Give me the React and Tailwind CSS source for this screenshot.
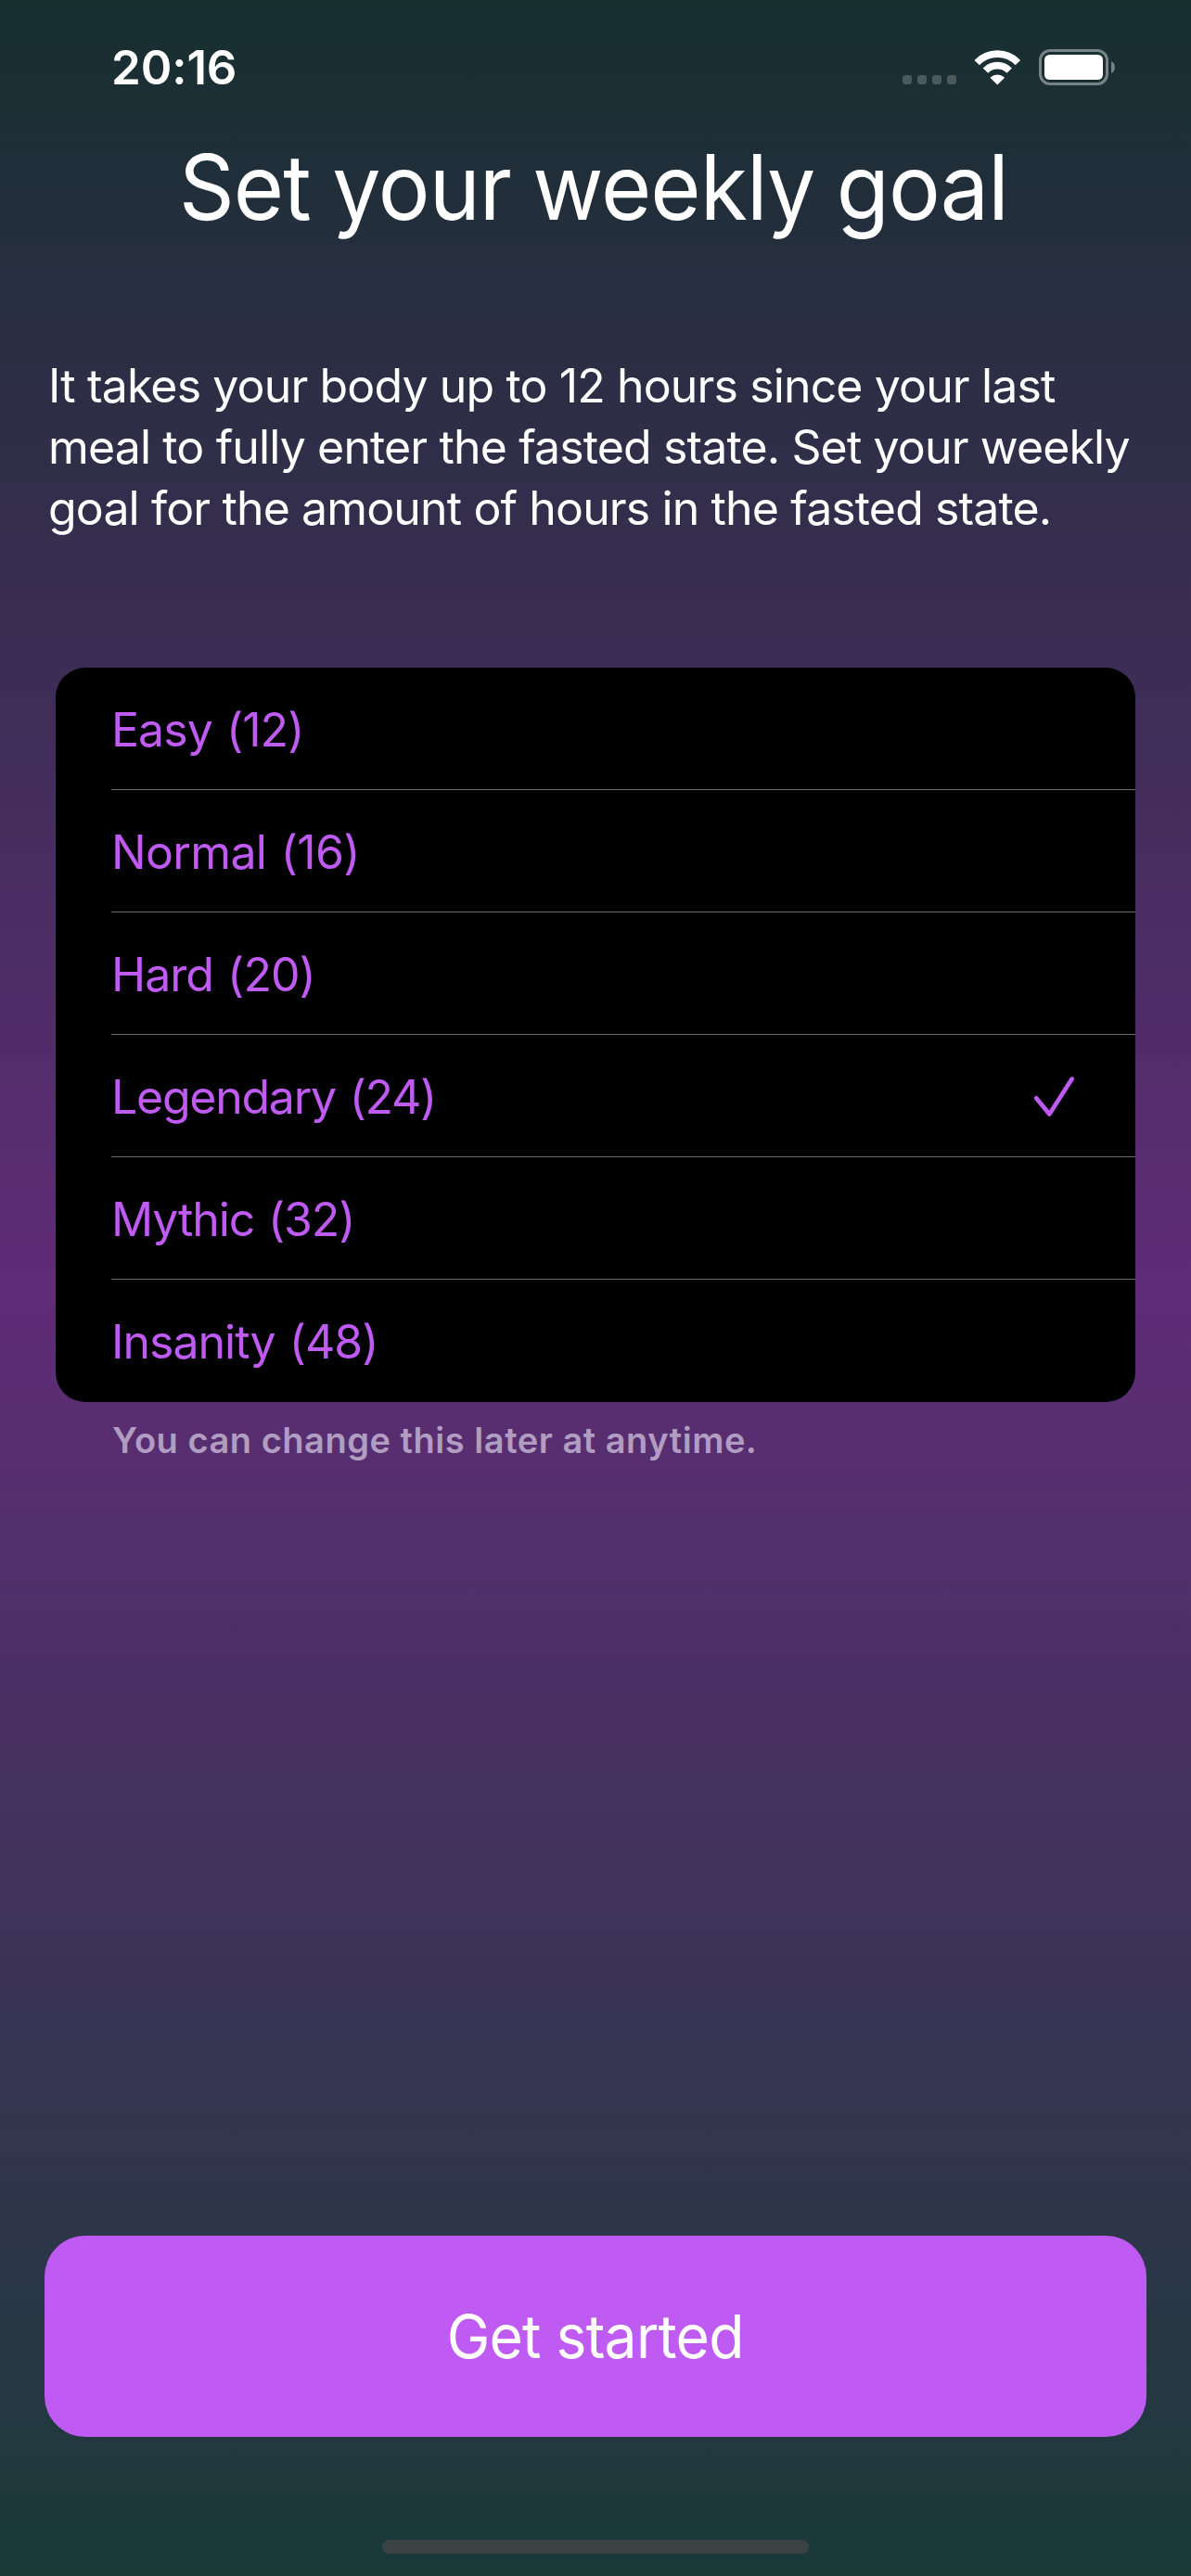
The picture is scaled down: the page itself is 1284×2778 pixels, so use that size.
const goals = [
  { label: "Easy (12)", tracking: "tracking-[-0.95px]" },
  { label: "Normal (16)", tracking: "tracking-[-0.66px]" },
  { label: "Hard (20)", tracking: "tracking-[-0.96px]" },
  { label: "Legendary (24)", tracking: "tracking-[-1.26px]", selected: true },
  { label: "Mythic (32)", tracking: "tracking-[-1.13px]" },
  { label: "Insanity (48)", tracking: "tracking-[-0.98px]" },
];

function WifiIcon() {
  return (
    <svg width="51" height="38" viewBox="0 0 51 38" fill="none" stroke="white">
      <path d="M3.2 13.6A30.6 30.6 0 0 1 47.4 13.6" strokeWidth="7.6" />
      <path d="M12.4 22.1A18 18 0 0 1 38.2 22.1" strokeWidth="7.6" />
      <path d="M18.4 29.8A10.5 10.5 0 0 1 32.2 29.8L25.3 36.4Z" fill="white" strokeWidth="1.4" strokeLinejoin="round" />
    </svg>
  );
}

function BatteryIcon() {
  return (
    <svg width="82" height="39" viewBox="0 0 82 39">
      <rect x="1.5" y="1.5" width="72" height="36" rx="10.5" fill="none" stroke="#788385" strokeWidth="3" />
      <rect x="6" y="6" width="63" height="27" rx="5.5" fill="white" />
      <path d="M78 13C83.2 15 83.2 24 78 26Z" fill="#788385" />
    </svg>
  );
}

function CheckIcon() {
  return (
    <svg width="44" height="44" viewBox="0 0 44 44" fill="none" stroke="#bf5af2" strokeWidth="4.7" strokeLinecap="round" strokeLinejoin="round">
      <path d="M3.2 24.2L17.4 41.5L41.6 3.6" />
    </svg>
  );
}

function StatusBar() {
  return (
    <header className="flex h-[142px] items-start justify-between pt-[43px] pr-[82px] pl-[120px]">
      <span className="text-[51px] leading-[60px] font-semibold tracking-[-0.1px]">20:16</span>
      <div className="flex items-start pt-[10px]">
        <div className="mt-7 mr-[19px] flex gap-1.5">
          {[0, 1, 2, 3].map((dot) => (
            <span key={dot} className="size-2.5 rounded-[3px] bg-[#4b595c]" />
          ))}
        </div>
        <div className="mt-px mr-[19px]">
          <WifiIcon />
        </div>
        <BatteryIcon />
      </div>
    </header>
  );
}

export default function App() {
  return (
    <div className="flex h-[2778px] w-[1284px] flex-col overflow-hidden bg-[linear-gradient(to_bottom,#162f2f_0%,#602c78_50%,#1a3a38_100%)] font-['Inter','Liberation_Sans',sans-serif] text-white">
      <StatusBar />
      <main className="flex flex-1 flex-col">
        <h1 className="ml-[193px] origin-left scale-x-95 text-[98px] leading-[120px] font-[420] tracking-[-0.95px] whitespace-nowrap [word-spacing:-2px]">
          Set your weekly goal
        </h1>
        <p className="mt-[121px] pl-[52px] text-[50px] leading-[66px] tracking-[-0.87px] whitespace-nowrap">
          It takes your body up to 12 hours since your last
          <br />
          meal to fully enter the fasted state. Set your weekly
          <br />
          goal for the amount of hours in the fasted state.
        </p>
        <ul className="mx-[60px] mt-[139px] overflow-hidden rounded-[32px] bg-black pl-[60px] text-[#bf5af2]">
          {goals.map((goal) => (
            <li
              key={goal.label}
              className="flex h-[132px] items-center justify-between border-b border-[#6a6a6c] pr-[66px] last:border-b-0"
            >
              <span className={`pt-0.5 text-[50px] leading-[66px] whitespace-nowrap [word-spacing:2px] ${goal.tracking}`}>
                {goal.label}
              </span>
              {goal.selected && <CheckIcon />}
            </li>
          ))}
        </ul>
        <p className="mt-[17px] pl-[121px] text-[38px] leading-[48px] font-semibold tracking-[0.52px] text-[#b09dc1]">
          You can change this later at anytime.
        </p>
      </main>
      <footer className="flex flex-col items-center px-12 pb-6">
        <button className="h-[217px] w-full rounded-[44px] bg-[#bf5af2] text-[65px] tracking-[-0.8px]">
          <span className="inline-block scale-x-96">Get started</span>
        </button>
        <div className="mt-[111px] h-[15px] w-[460px] rounded-full bg-[#3a4243]" />
      </footer>
    </div>
  );
}
